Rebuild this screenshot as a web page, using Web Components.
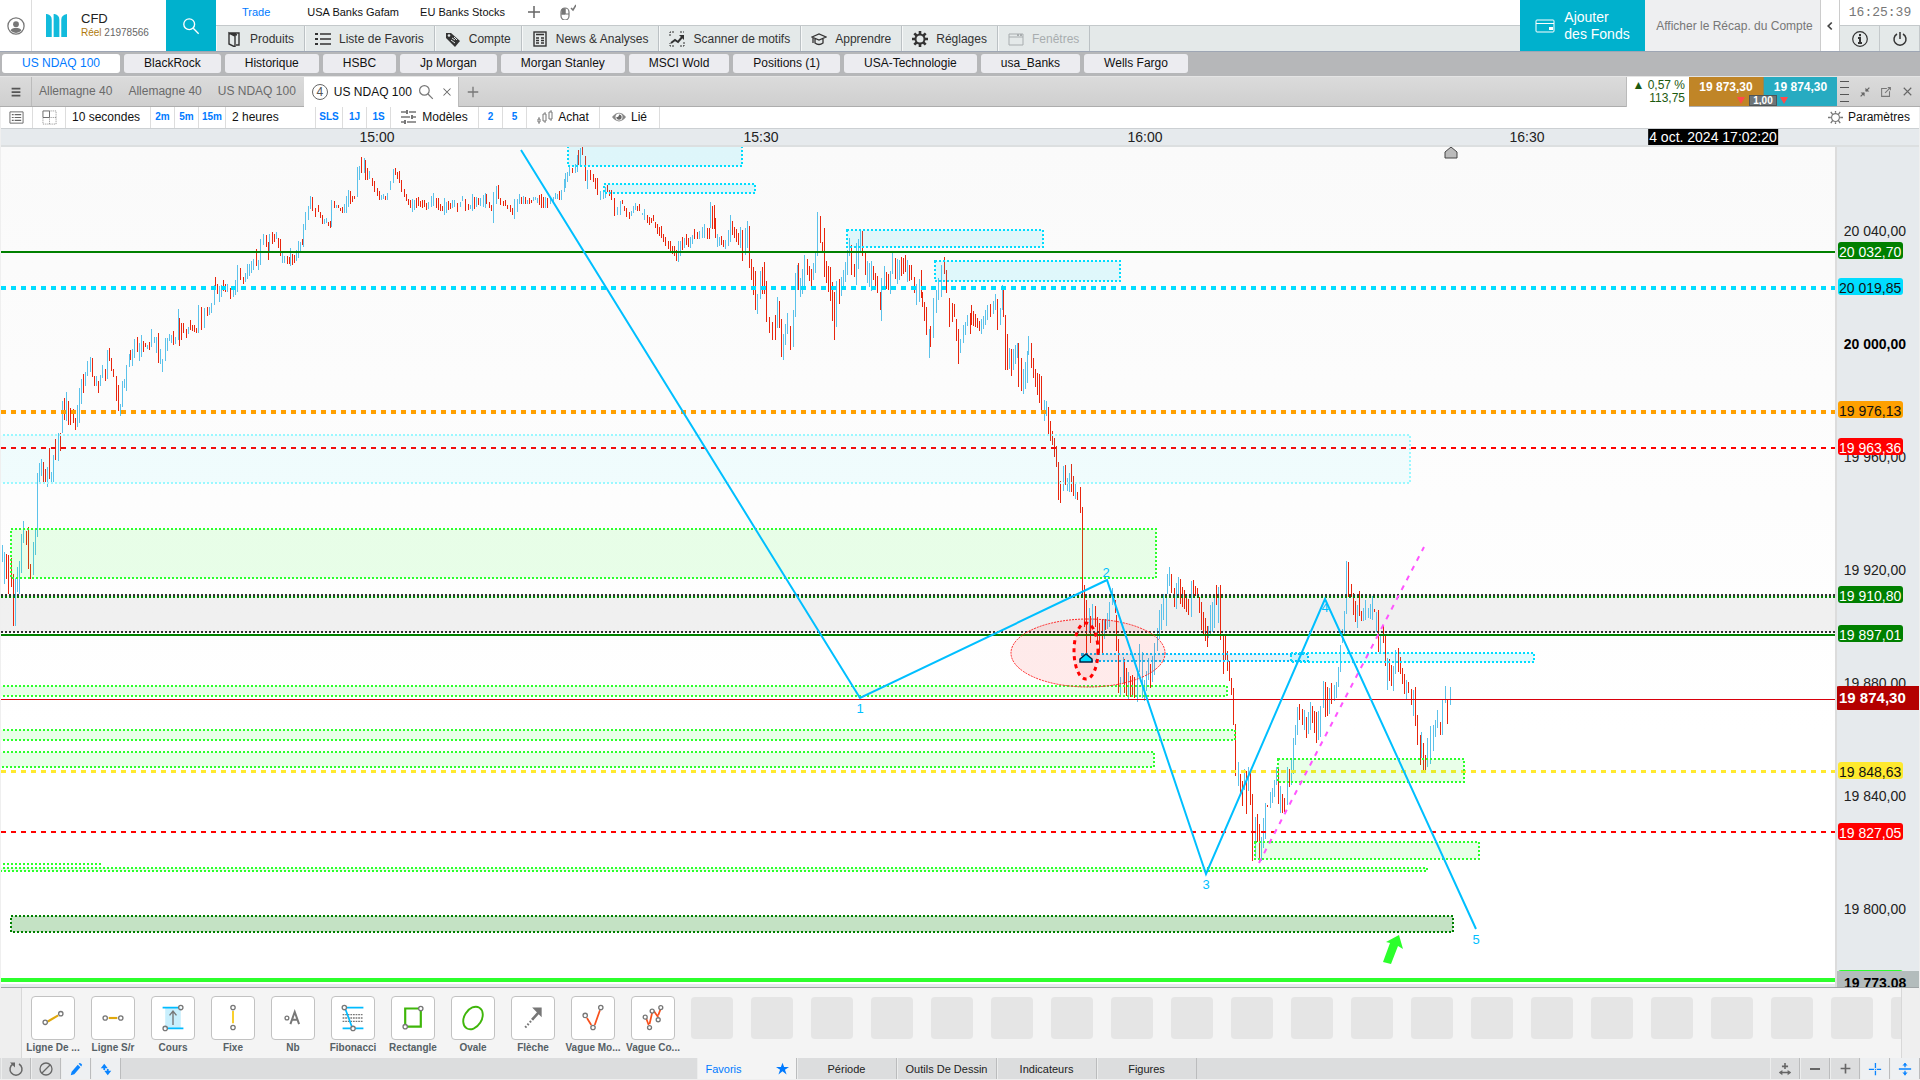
<!DOCTYPE html>
<html lang="fr">
<head>
<meta charset="utf-8">
<title>CFD - US NDAQ 100</title>
<style>
	body {
		margin: 0;
		height: 100vh;
		overflow: hidden;
		font: 12px/16px "Liberation Sans", Arial, sans-serif;
		color: #222;
		background: #efefef;
	}
</style>
</head>
<body>
<trading-desk></trading-desk>

<script>
const BUTTON_RESET = `
	button, a, select, input {
		font: inherit;
		color: inherit;
		background: none;
		border: 0;
		padding: 0;
		margin: 0;
		border-radius: 0;
		box-sizing: border-box;
		text-decoration: none;
		white-space: nowrap;
	}
	select { appearance: none; }
`;

/**
 * Base class: clones the static template of the subclass in an open shadow root
 */
class BaseElement extends HTMLElement {
	constructor() {
		super();

		const template = document.createElement("template");
		template.innerHTML = this.constructor.template;

		this.attachShadow({mode: "open"});
		this.shadowRoot.appendChild(template.content.cloneNode(true));
	}
}

const ICONS = {
	user: `<circle cx="10" cy="10" r="9" fill="none" stroke="#777" stroke-width="1.4"/><circle cx="10" cy="8" r="3.2" fill="#777"/><path d="M4 15c1-4 11-4 12 0a8 8 0 0 1-12 0z" fill="#777"/>`,
	logo: `<path d="M0 0h1q5 1 5 6v18h-6zM8 0h1q5 1 5 6v18h-6zM22 0v24h-6v-18q0-5 6-6z" fill="#12bbdc"/>`,
	search: `<circle cx="8" cy="8" r="6" fill="none" stroke="currentColor" stroke-width="1.5"/><path d="M12.500 12.500l6 6" stroke="currentColor" stroke-width="1.5"/>`,
	plus: `<path d="M8 2v12M2 8h12" stroke="currentColor" stroke-width="var(--weight, 1.5)"/>`,
	mouse: `<rect x="1" y="4" width="8" height="12" rx="4" fill="none" stroke="#777" stroke-width="1.2"/><path d="M2 5h3v5h-3zM5 4v6M1 10h8" fill="#777" stroke="#777"/><path d="M11 4l2 2 3-5" fill="none" stroke="#777" stroke-width="1.5"/>`,
	book: `<path d="M3 2h10v12h-3M3 2l6 3v11l-6-3zM5 2l6 2" fill="none" stroke="currentColor" stroke-width="1.4"/>`,
	list: `<path d="M5 3h11M5 8h11M5 13h11" stroke="currentColor" stroke-width="1.6"/><path d="M0 2h3v2h-3zM0 7h3v2h-3zM0 12h3v2h-3z" fill="currentColor"/>`,
	tag: `<path d="M1 2l5 0 9 8-5 6-9-9z" fill="currentColor"/><circle cx="4" cy="4.500" r="1.300" fill="#e4e9e9"/><path d="M7 7l3 2M6 9l4 3M9 6l3 3" stroke="#e4e9e9"/>`,
	news: `<rect x="2" y="1" width="12" height="14" fill="none" stroke="currentColor" stroke-width="1.400"/><path d="M4 3.500h8M4 7h3M4 9.500h3M4 12h3M9 7h3M9 9.500h3M9 12h3" stroke="currentColor" stroke-width="1.400"/>`,
	scanner: `<path d="M1 5v-4h4M11 1h4M15 11v4h-4M5 15h-4v-3" fill="none" stroke="currentColor" stroke-dasharray="2 1"/><path d="M2 12l4-3 3 2 5-6" fill="none" stroke="currentColor" stroke-width="2"/><path d="M10 4h5v5z" fill="currentColor"/>`,
	learn: `<path d="M1 6l7-3 7 3-7 3zM4 8v4q4 3 8 0v-4M2 7v5" fill="none" stroke="currentColor" stroke-width="1.300"/>`,
	gear: `<circle cx="8" cy="8" r="4.500" fill="none" stroke="currentColor" stroke-width="2"/><g stroke="currentColor" stroke-width="2.600"><path d="M8 0v3M8 13v3M0 8h3M13 8h3M2.300 2.300l2.200 2.200M11.500 11.500l2.200 2.200M2.300 13.700l2.200-2.200M11.500 4.500l2.200-2.200"/></g>`,
	sun: `<circle cx="8" cy="8" r="4.200" fill="none" stroke="#777" stroke-width="1.200"/><path d="M8 1v2M8 13v2M0 8h3M13 8h3M3 2l2 3M11 11l2 3M3 14l2-3M11 5l2-3" stroke="#777" stroke-width="1.400"/>`,
	window: `<path d="M1 3h14v11h-14zM1 6h14" fill="none" stroke="currentColor"/><path d="M9 3h2v2h-2zM12 3h2v2h-2z" fill="currentColor"/>`,
	card: `<rect x="1" y="4" width="18" height="12" rx="1" fill="none" stroke="#fff"/><path d="M1 7.500h18" stroke="#fff"/><path d="M14 11h4v3h-4z" fill="#fff"/>`,
	chevron: `<path d="M10 4l-4 4 4 4" fill="none" stroke="#444" stroke-width="2"/>`,
	info: `<circle cx="8" cy="8" r="7.300" fill="none" stroke="currentColor" stroke-width="1.200"/><path d="M8 3v2.200M6 7h2v5M6 12h4" fill="none" stroke="currentColor" stroke-width="2"/>`,
	power: `<path d="M5 3a6 6 0 1 0 6 0M8 1v7" fill="none" stroke="currentColor" stroke-width="1.500"/>`,
	burger: `<path d="M3 4h10M3 8h10M3 12h10" stroke="#555" stroke-width="2"/>`,
	close: `<path d="M4 4l8 8M12 4l-8 8" stroke="#666" stroke-width="1.200"/>`,
	shrink: `<path d="M3 13l4-4M13 3l-4 4" stroke="#666" stroke-width="1.500"/><path d="M3 8.500h4.500v4.500zM8.500 3v4.500h4.500z" fill="#666"/>`,
	popout: `<path d="M9 4h-6v9h9v-6M7 9l6-6M10 3h3v3" fill="none" stroke="#777" stroke-width="1.200"/>`,
	lines: `<path d="M3 2.500h9M3 8.500h9M3 15.500h9M3 22.500h9" stroke="#555"/>`,
	sheet: `<path d="M1 2h14v12h-14z" fill="none" stroke="#666"/><path d="M3 5h2M3 8h2M3 11h2M6 5h7M6 8h7M6 11h7" stroke="#666" stroke-width="1.300"/>`,
	grid: `<path d="M1 1h7v7h-7z" fill="none" stroke="#666"/><path d="M8 1h7v14h-14v-7M8 8h7M8 8v7" fill="none" stroke="#888" stroke-dasharray="1 1"/>`,
	models: `<path d="M0 3h5M8 3h7M0 8h9M12 8h3M0 13h3M6 13h9" stroke="#777" stroke-width="1.500"/><path d="M6 1v4M11 6v4M4 11v4" stroke="#777" stroke-width="2"/>`,
	bars: `<path d="M2 8v7M8 3v11M14 1v11" stroke="#888"/><path d="M1 10h2v3h-2zM6 5h3v7h-3zM12 3h3v7h-3z" fill="#fff" stroke="#777"/>`,
	eye: `<path d="M0 8q8-10 16 0q-8 10-16 0z" fill="#888"/><circle cx="8" cy="8" r="4" fill="#fff"/><path d="M8 5a3 3 0 1 1-3 3q3 0 3-3z" fill="#666"/>`,
	trend: `<path d="M9 21l12-7" stroke="#e0a80c" stroke-width="2.500"/><circle cx="6" cy="22" r="2.500"/><circle cx="24" cy="12" r="2.500"/>`,
	support: `<path d="M10 17h10" stroke="#e0a80c" stroke-width="2.500"/><circle cx="6" cy="17" r="2.500"/><circle cx="24" cy="17" r="2.500"/>`,
	price: `<path d="M6 5h18v24h-18z" fill="#c8effd" stroke="none"/><path d="M3 5h18M9 29h18" stroke="#0bf" stroke-width="2"/><path d="M15 25v-16M11 14l4-5 4 5" stroke-width="1.600"/><circle cx="24" cy="5" r="2.500"/><circle cx="6" cy="29" r="2.500"/>`,
	fixed: `<path d="M15 9v14" stroke="#f8c80c" stroke-width="2"/><circle cx="15" cy="5" r="2.500"/><circle cx="15" cy="28" r="2.500"/>`,
	letter: `<circle cx="8" cy="17" r="2.200"/><path d="M12 24l5-14 5 14M14 19h6" stroke-width="2.300"/>`,
	fib: `<path d="M8 5h19M3 29h24" stroke="#0bf" stroke-width="2"/><path d="M3 13h24M3 17h24M3 21h24" stroke-dasharray="2 1"/><path d="M6 6l8 22" stroke="#0bf" stroke-width="2"/><circle cx="5" cy="5" r="2.500" fill="#fff"/><circle cx="15" cy="29" r="2.500" fill="#fff"/>`,
	rect: `<path d="M6 6h18v21h-18z" stroke="#3fb60a" stroke-width="2.500"/><circle cx="24" cy="6" r="2.500" fill="#fff"/><circle cx="6" cy="27" r="2.500" fill="#fff"/>`,
	oval: `<ellipse cx="15" cy="17" rx="10" ry="14" transform="rotate(32 15 17)" stroke="#3fb60a" stroke-width="2.200"/>`,
	arrow: `<path d="M6 28l9-10" stroke-width="2.500" stroke-dasharray="2 2"/><path d="M14 19l8-9" stroke-width="3"/><path d="M14 5h11v11l-4-4-3-3z" fill="#777" stroke="none"/>`,
	wave: `<path d="M8 17l5 8M17 25l6-17" stroke="#f8501c" stroke-width="2"/><circle cx="6" cy="14" r="2.500"/><circle cx="15" cy="28" r="2.500"/><circle cx="24" cy="5" r="2.500"/>`,
	waves: `<path d="M7 17l3 8M11 24l3-13M16 9l5 7M21 14l3-8" stroke="#f8501c" stroke-width="2"/><g fill="#fff"><circle cx="6" cy="16" r="2.300"/><circle cx="11" cy="28" r="2.300"/><circle cx="14" cy="9" r="2.300"/><circle cx="21" cy="19" r="2.300"/><circle cx="24" cy="5" r="2.300"/></g>`,
	reload: `<path d="M11 3a6 6 0 1 1-6 0" fill="none" stroke="#666" stroke-width="1.500"/><path d="M2 1.500h5v5z" fill="#666"/>`,
	forbid: `<circle cx="8" cy="8" r="6" fill="none" stroke="#666" stroke-width="1.300"/><path d="M4 12l8-8" stroke="#666" stroke-width="1.300"/>`,
	pencil: `<path d="M2 15l1-4 7-8 3 3-7 8zM11 2l1-1q2 0 3 2l-1 2z" fill="currentColor"/>`,
	updown: `<path d="M2 7l4-5 4 5zM6 10h8l-4 5zM5 7h2v2h-2zM9 8h2v2h-2z" fill="currentColor"/>`,
	star: `<path d="M8 1l2 5h6l-5 3.500 2 6-5-4-5 4 2-6-5-3.500h6z" fill="currentColor"/>`,
	scale: `<path d="M8 1v7M4.500 5h7M2 12h12" stroke="#666" stroke-width="1.800"/><path d="M1 12l4-3v6zM15 12l-4-3v6z" fill="#666"/>`,
	minus: `<path d="M3 8h10" stroke="#666" stroke-width="2"/>`,
	cross: `<path d="M8.500 1v14M1 8.500h14" stroke="currentColor" stroke-width="1.500"/><path d="M7 7h3v3h-3z" fill="#eef0f2"/><path d="M8 8h1v1h-1z" fill="currentColor"/>`,
	split: `<path d="M1 8h14M8 1v5M8 10v5" stroke="currentColor" stroke-width="1.500"/><path d="M5 4l3-3 3 3zM5 12l3 3 3-3z" fill="currentColor"/>`
};

/**
 * <ui-icon name size box> draws one of the ICONS
 */
class UiIcon extends HTMLElement {
	constructor() {
		super();
		this.attachShadow({mode: "open"});
	}

	connectedCallback() {
		const size = this.getAttribute("size") || "16";
		const box = this.getAttribute("box") || "16 16";

		this.shadowRoot.innerHTML = `
		<style>
		:host { display: inline-flex; flex: none; }
		svg { display: block; }
		</style>
		<svg width="${size}" height="${this.getAttribute("h") || size}" viewBox="0 0 ${box}" aria-hidden="true">${ICONS[this.getAttribute("name")]}</svg>`;
	}
}

customElements.define("ui-icon", UiIcon);

class MenuItem extends BaseElement {
	static template = `
	<style>
	${BUTTON_RESET}
	:host {
		display: flex;
		border-right: 1px solid #bbc1c4;
		border-left: 1px solid #f6f8f8;
	}
	:host([disabled]) { color: #a8adaf; }
	button {
		display: flex;
		align-items: center;
		gap: 8px;
		padding: 0 10px 0 9px;
	}
	</style>
	<button type="button"><slot name="icon"></slot><slot></slot></button>
	`;
}

customElements.define("menu-item", MenuItem);

class AppHeader extends BaseElement {
	static template = `
	<style>
	${BUTTON_RESET}
	:host {
		display: flex;
		height: 51px;
		background: #fff;
		border-bottom: 1px solid #9ea6b4;
	}
	.user {
		width: 32px;
		border-right: 1px solid #ddd;
		display: grid;
		place-items: center;
	}
	.account {
		display: flex;
		align-items: center;
		gap: 14px;
		width: 134px;
		padding-left: 14px;
		box-sizing: border-box;
	}
	.account b { display: block; font-weight: normal; font-size: 13px; line-height: 15px; }
	.account small { display: block; font-size: 10px; line-height: 14px; color: #666; }
	.account i { font-style: normal; color: #b07a0c; }
	.search { width: 50px; background: #00b1cd; color: #fff; display: grid; place-items: center; }
	.center { flex: 1; display: flex; flex-direction: column; min-width: 0; }
	.spaces {
		height: 25px;
		display: flex;
		align-items: center;
		font-size: 11px;
		padding-left: 26px;
		color: #111;
		box-sizing: border-box;
		padding-bottom: 1px;
	}
	.spaces a { margin-right: 21px; }
	.spaces a:first-child { color: #007aff; margin-right: 37px; }
	.spaces button { display: flex; margin: 0 18px 0 0; color: #666; }
	nav {
		flex: 1;
		display: flex;
		background: #e4e9e9;
		border-top: 1px solid #c4c9cb;
		color: #333;
	}
	.funds {
		width: 125px;
		background: #00b1cd;
		color: #fff;
		font-size: 14px;
		line-height: 17px;
		display: flex;
		align-items: center;
		justify-content: center;
		gap: 9px;
		text-align: left;
	}
	.recap { width: 176px; padding-left: 4px; background: #eeeff1; color: #777; border-right: 1px solid #ccc; }
	.fold { width: 19px; border-right: 1px solid #ccc; display: grid; place-items: center; }
	.side { width: 80px; display: grid; grid-template: 25px 1fr / 1fr 1fr; }
	time {
		grid-column: 1 / 3;
		font: 13px/26px "Liberation Mono", monospace;
		color: #777;
		text-align: center;
	}
	.side button {
		background: #e4e9e9;
		border-top: 1px solid #c4c9cb;
		border-right: 1px solid #c4c9cb;
		display: grid;
		place-items: center;
		color: #333;
	}
	</style>
	<button class="user" type="button" aria-label="Profil"><ui-icon name="user" size="18" box="20 20"></ui-icon></button>
	<div class="account">
		<ui-icon name="logo" size="21" h="23" box="22 24"></ui-icon>
		<div><b>CFD</b><small><i>Réel</i> 21978566</small></div>
	</div>
	<button class="search" type="button" aria-label="Rechercher"><ui-icon name="search" size="18" box="20 20"></ui-icon></button>
	<div class="center">
		<div class="spaces">
			<a href="#trade">Trade</a><a href="#gafam">USA Banks Gafam</a><a href="#eu">EU Banks Stocks</a>
			<button type="button" aria-label="Ajouter"><ui-icon name="plus"></ui-icon></button>
			<button type="button" aria-label="Souris"><ui-icon name="mouse"></ui-icon></button>
		</div>
		<nav>
			<menu-item><ui-icon slot="icon" name="book"></ui-icon>Produits</menu-item>
			<menu-item><ui-icon slot="icon" name="list"></ui-icon>Liste de Favoris</menu-item>
			<menu-item><ui-icon slot="icon" name="tag"></ui-icon>Compte</menu-item>
			<menu-item><ui-icon slot="icon" name="news"></ui-icon>News &amp; Analyses</menu-item>
			<menu-item><ui-icon slot="icon" name="scanner"></ui-icon>Scanner de motifs</menu-item>
			<menu-item><ui-icon slot="icon" name="learn"></ui-icon>Apprendre</menu-item>
			<menu-item><ui-icon slot="icon" name="gear"></ui-icon>Réglages</menu-item>
			<menu-item disabled><ui-icon slot="icon" name="window"></ui-icon>Fenêtres</menu-item>
		</nav>
	</div>
	<button class="funds" type="button"><ui-icon name="card" size="20" box="20 20"></ui-icon><span>Ajouter<br>des Fonds</span></button>
	<button class="recap" type="button">Afficher le Récap. du Compte</button>
	<button class="fold" type="button" aria-label="Replier"><ui-icon name="chevron" size="14"></ui-icon></button>
	<div class="side">
		<time>16:25:39</time>
		<button type="button" aria-label="Infos"><ui-icon name="info"></ui-icon></button>
		<button type="button" aria-label="Quitter"><ui-icon name="power"></ui-icon></button>
	</div>
	`;
}

customElements.define("app-header", AppHeader);

class DeskTabs extends BaseElement {
	static template = `
	<style>
	${BUTTON_RESET}
	:host {
		display: flex;
		gap: 4px;
		height: 24px;
		padding: 2px 2px 3px;
		box-sizing: border-box;
		background: #b6b7b9;
	}
	button { background: #ececf0; border-radius: 3px; padding: 0 20px 2px; color: #111; }
	button.on { background: #fff; color: #007aff; }
	</style>
	<button type="button" class="on">US NDAQ 100</button>
	<button type="button">BlackRock</button>
	<button type="button">Historique</button>
	<button type="button">HSBC</button>
	<button type="button">Jp Morgan</button>
	<button type="button">Morgan Stanley</button>
	<button type="button">MSCI Wold</button>
	<button type="button">Positions (1)</button>
	<button type="button">USA-Technologie</button>
	<button type="button">usa_Banks</button>
	<button type="button">Wells Fargo</button>
	`;
}

customElements.define("desk-tabs", DeskTabs);

class ChartTabs extends BaseElement {
	static template = `
	<style>
	${BUTTON_RESET}
	:host {
		display: flex;
		height: 31px;
		box-sizing: border-box;
		background: linear-gradient(#dbdbdb, #cfcfcf);
		border-bottom: 1px solid #adadad;
		border-top: 1px solid #e4e4e4;
		color: #6a6a6a;
	}
	.menu { width: 32px; display: grid; place-items: center; border-right: 1px solid #bbb; }
	.tab { padding: 0 8px 1px; }
	.tab.first { padding-left: 7px; }
	.current {
		display: flex;
		align-items: center;
		gap: 6px;
		width: 155px;
		margin-bottom: -1px;
		padding: 0 8px;
		box-sizing: border-box;
		background: #fff;
		color: #111;
		white-space: nowrap;
		border-right: 1px solid #bbb;
	}
	.current span {
		width: 14px;
		flex: none;
		border: 1px solid #666;
		border-radius: 50%;
		line-height: 14px;
		text-align: center;
		color: #555;
	}
	.current button { display: flex; color: #777; }
	.add { padding: 0 7px; color: #777; display: flex; align-items: center; }
	.change {
		margin-left: auto;
		width: 58px;
		padding: 2px 4px 0 0;
		background: #fff;
		color: #1d5a10;
		line-height: 13px;
		text-align: right;
		margin-bottom: -1px;
		border-left: 1px solid #bbb;
	}
	.quote { position: relative; display: flex; }
	.quote button { width: 74px; font-weight: bold; color: #fff; padding-bottom: 9px; }
	.sell { background: #c08527; }
	.buy { background: #27abc1; border-left: 1px solid #8a8a60; }
	.size {
		position: absolute;
		bottom: 0;
		left: calc(50% - 14px);
		width: 28px;
		height: 11px;
		background: #6d7578;
		border: 1px solid #4e5558;
		color: #fff;
		font-weight: bold;
		font-size: 10px;
		line-height: 9px;
		text-align: center;
	}
	.quote::before, .quote::after {
		content: "";
		position: absolute;
		z-index: 1;
		bottom: 2px;
		left: 48px;
		border: 4px solid transparent;
		border-top: 7px solid #ff4a4a;
		border-bottom: 0;
	}
	.quote::after { left: 91px; }
	.tools { display: flex; align-items: center; width: 83px; justify-content: space-between; padding-right: 5px; box-sizing: border-box; }
	.tools button { display: flex; }
	</style>
	<button class="menu" type="button" aria-label="Menu"><ui-icon name="burger" size="14"></ui-icon></button>
	<button class="tab first" type="button">Allemagne 40</button>
	<button class="tab" type="button">Allemagne 40</button>
	<button class="tab" type="button">US NDAQ 100</button>
	<div class="current">
		<span>4</span>US NDAQ 100
		<button type="button" aria-label="Rechercher"><ui-icon name="search" box="20 20"></ui-icon></button>
		<button type="button" aria-label="Fermer"><ui-icon name="close" size="14"></ui-icon></button>
	</div>
	<button class="add" type="button" aria-label="Nouvel onglet"><ui-icon name="plus" size="14"></ui-icon></button>
	<div class="change">▲ 0,57 %<br>113,75</div>
	<div class="quote">
		<button class="sell" type="button">19 873,30</button>
		<button class="buy" type="button">19 874,30</button>
		<input class="size" aria-label="Taille" value="1,00">
	</div>
	<div class="tools">
		<ui-icon name="lines" size="14" h="26" box="14 26"></ui-icon>
		<button type="button" aria-label="Réduire"><ui-icon name="shrink" size="14"></ui-icon></button>
		<button type="button" aria-label="Détacher"><ui-icon name="popout" size="14"></ui-icon></button>
		<button type="button" aria-label="Fermer"><ui-icon name="close" size="15"></ui-icon></button>
	</div>
	`;
}

customElements.define("chart-tabs", ChartTabs);

class ChartToolbar extends BaseElement {
	static template = `
	<style>
	${BUTTON_RESET}
	:host {
		display: flex;
		height: 22px;
		box-sizing: border-box;
		background: #fff;
		border-bottom: 1px solid #ccd0d3;
		margin: 0 1px;
		color: #111;
	}
	button, select {
		display: flex;
		align-items: center;
		justify-content: center;
		gap: 5px;
		border-right: 1px solid #ddd;
		padding: 0 0 1px;
	}
	.mini { width: 24px; color: #007aff; font-weight: bold; font-size: 10px; }
	.wide { width: 27px; }
	.icon { width: 32px; }
	.icon.sheet { width: 33px; }
	select { padding-left: 6px; }
	.step { width: 85px; }
	.span { width: 90px; }
	.models { width: 88px; }
	.buy { width: 73px; }
	.linked { width: 60px; }
	.params { margin-left: auto; border: 0; padding-right: 9px; }
	</style>
	<button class="icon" type="button" aria-label="Liste"><ui-icon name="sheet" size="15"></ui-icon></button>
	<button class="icon sheet" type="button" aria-label="Grille"><ui-icon name="grid" size="15"></ui-icon></button>
	<select class="step" aria-label="Intervalle"><option>10 secondes</option></select>
	<button class="mini" type="button">2m</button>
	<button class="mini" type="button">5m</button>
	<button class="mini wide" type="button">15m</button>
	<select class="span" aria-label="Période"><option>2 heures</option></select>
	<button class="mini wide" type="button">SLS</button>
	<button class="mini" type="button">1J</button>
	<button class="mini" type="button">1S</button>
	<button class="models" type="button"><ui-icon name="models"></ui-icon>Modèles</button>
	<button class="mini" type="button">2</button>
	<button class="mini" type="button">5</button>
	<button class="buy" type="button"><ui-icon name="bars"></ui-icon>Achat</button>
	<button class="linked" type="button"><ui-icon name="eye" size="14"></ui-icon>Lié</button>
	<button class="params" type="button"><ui-icon name="sun" size="15"></ui-icon>Paramètres</button>
	`;
}

customElements.define("chart-toolbar", ChartToolbar);

// bars: x, colour (b up, r down), high-low
const BARS = `2b545-562 4b552-584 6r554-579 8r555-594 11r558-587 13r574-626 15b578-626 17b567-592 19b561-594 21b534-573 23b521-543 26r531-545
28r527-569 30r564-579 33b542-575 35b530-555 37b473-537 39b463-482 41b459-476 43r462-483 45r469-482 47b467-487 49r448-479 51b472-483
53b455-482 55r439-460 58b433-461 60r433-451 62b401-433 64r398-420 66b392-421 68r401-425 70r408-425 73r409-423 75r418-430
79b388-423 81b379-404 83r374-393 85b372-386 87b361-376 90b357-372 92r358-377 94r376-386 96b376-386 98r381-393 102b365-378 105r369-381
107b350-379 109r348-361 111r358-371 113r369-377 116r376-401 118r385-411 120b404-416 122b381-407 124b379-388 126b365-391 129b354-367 130r350-360
132b349-366 134b339-358 137r337-352 139b343-361 141b335-357 143r341-352 145r343-347 149r342-350 151b329-347 154b337-343
158r333-363 160b349-364 162b359-372 165b338-361 169b334-341 173r331-345 175b337-344 178b309-340 179r318-346 183r323-333 186r329-338
190r320-330 196r328-333 198b305-333 201r307-330 204b308-328 207r307-316 211b303-313 214b285-305 215r277-286 219b286-302
223r280-291 227b284-292 230r288-299 233b290-297 237b265-292 240r268-280 243r277-284 247b264-279 253b259-270 256r249-266
258b260-270 260b239-265 263b234-245 266r235-247 268r242-260 269b234-251 272r232-244 276b232-239 280r239-256 282b253-263
289r257-264 290b248-266 294r255-263 298b241-258 302r239-245 303b224-247 305b212-230 310b196-209 312r197-211 315r208-217
318r205-212 322r215-224 326b218-223 330r221-228 331b200-227 334r201-208 338r205-208 342r207-213 346b196-213 348b190-207
350r191-204 354r196-199 357b167-197 359b166-180 361r157-173 364b158-173 365r160-180 369b171-179 374r181-192 379r191-200
383b194-199 387b193-200 390b181-190 393b169-183 395r168-175 399r171-183 401r180-192 406r194-201 410r200-208 412b199-212
418r197-206 426r203-210 433b193-206 438r198-210 442r206-211 444b198-215 448r201-210 454b200-207 457r203-212 462b196-201
465r199-211 470b205-209 472b194-211 478r198-205 485b193-208 486r194-204 491r205-211 493b192-223 496b186-204 498r185-199
500r198-205 505r200-206 512r208-215 514b199-219 519b194-204 525r197-204 529r198-204 535b197-200 541r194-208 547r198-208
550b197-204 555b193-199 561b190-200 564b179-192 565b173-188 569b167-176 572r168-173 577b155-172 578r150-165 580b148-165
582r147-155 585r156-181 587b170-189 590r170-180 593r174-182 597r178-195 600b191-200 605b187-198 607r185-192 611r190-200
614r198-216 617b207-215 620b201-215 622r200-204 626r208-217 629r212-219 635b203-210 639r204-211 642b213-215 644b209-220
649r217-225 653r215-221 657r224-234 661r226-238 665r237-246 670r241-251 674r246-256 676r250-261 678b241-262 682r237-250
686r234-245 690b237-248 694r229-239 697r232-239 704b224-238 709r228-239 710b202-228 714r205-229 715r218-238 717b234-247
721r236-245 725b240-249 730b215-242 732r221-235 738r233-245 740b227-248 742r230-261 747b221-248 749r226-268 751r259-280
755r271-310 757b294-314 760b271-299 762r267-294 764r262-294 766r281-322 769r317-333 772r322-340 775r315-340 777b297-328
779r301-328 781r319-357 783b334-360 785b324-345 787b313-334 790r326-350 793b310-347 795b273-317 797b265-290 798r263-290
800b278-297 804b255-290 807r259-275 811r269-286 815b253-273 817b212-256 820r216-243 822r242-251 824r228-277 826r261-283
830r267-301 834r292-340 836b281-327 839r279-304 843b270-288 847b250-275 849b238-256 851r245-275 854r264-277 856b243-285
860b230-252 862r231-256 865r253-275 867b261-283 871b261-291 873r266-280 877r276-293 880r292-310 881b278-321 884b266-287
888r274-290 890b271-294 892b253-274 897b259-284 901r257-276 905r255-272 907b260-282 911r265-280 916b284-305 921r270-298
922r292-307 926r307-335 929b329-358 930r326-347 933b298-338 936b290-313 938b278-300 941b265-297 944r257-274 946r270-293
949r298-327 954r304-317 958r329-364 960b339-353 963b325-343 967b315-326 970r313-334 971r305-325 977r318-328 981b319-334
987b305-320 990r304-317 995b294-310 997r299-330 1000b308-325 1002b285-310 1003r289-317 1005r315-370 1009b348-369
1011r349-376 1017b343-358 1018r343-387 1023b369-394 1027b351-383 1028b336-355 1031r343-368 1035r369-387 1041r376-411
1044b400-421 1046b401-416 1048r407-436 1052r431-445 1054r438-457 1056r446-467 1058r462-500 1060r481-503 1063b466-491
1065r465-485 1067b478-491 1071r464-492 1075b483-499 1077r492-500 1080r487-513 1082r507-595 1084r585-627 1086r600-655
1089b608-633 1090r616-643 1092b604-627 1095r606-627 1099r623-655 1102r619-654 1104b619-639 1105r619-630 1109b602-627
1112b588-605 1115r600-613 1116r615-651 1118r639-693 1120b677-695 1123b657-683 1124r659-693 1128b672-699 1132r675-695
1134r677-698 1137b672-702 1139b644-672 1142b652-698 1144b680-701 1148b658-680 1150r664-688 1154b643-675 1157b628-651
1159b610-639 1163b594-620 1166b594-626 1167b574-594 1169b567-586 1171r574-593 1174r588-607 1176b583-609 1178b577-595
1180r579-604 1184r590-609 1188r599-615 1191b581-617 1193r580-596 1197r588-596 1201r602-630 1207r626-647 1208b626-638
1210b605-635 1214b595-628 1216r585-605 1220r585-640 1223r636-674 1225r636-660 1229r661-681 1231r678-695 1233r688-725
1235r724-776 1238b762-786 1242r781-806 1244b769-790 1246r771-814 1248b767-791 1250r773-805 1252r794-861 1255b817-857
1257r814-842 1259r824-863 1261b837-861 1263b818-848 1265b803-839 1267r805-807 1270b792-808 1274b780-797 1276b767-785
1278r769-804 1280b786-813 1284r798-812 1287b767-805 1289r769-787 1291b759-785 1293b738-774 1295b725-745 1297b707-735
1299r704-720 1304b710-730 1306r717-738 1310b702-730 1312r706-723 1316r712-743 1320b706-737 1323b681-708 1325r682-717
1329b688-714 1331r683-704 1336b682-698 1338b667-687 1340b645-672 1342b629-643 1344b611-635 1346b561-614 1348r562-597
1351r584-597 1353r593-615 1357b605-628 1359r591-616 1361r611-621 1365b600-620 1368b608-618 1372b596-620 1374r609-612
1378r610-652 1380b635-653 1383r626-643 1385r636-666 1387b658-690 1389r659-681 1393b666-691 1395b650-674 1398r648-672
1400r657-674 1404r674-694 1406b680-699 1408r682-693 1411r689-705 1415r687-726 1417r715-745 1420r735-765 1421b732-758
1423r743-770 1425r755-770 1427b738-767 1430b726-764 1435b720-737 1437b710-728 1440r722-735 1442b700-735 1445b686-703
1447r699-724 1450b687-705`;

// levels across the whole plot: y, stroke width, colour, dash
const LEVELS = [
	[252, 2, "#008000", ""],
	[288, 4, "#00ddff", "5 5"],
	[412, 4, "#ffa000", "5 5"],
	[448, 2, "#ff0000", "5 5"],
	[832, 2, "#ff0000", "5 5"],
	[980, 4, "#2cff2c", ""]
];

// zones: left, top, right, bottom, stroke, fill
const GREEN = "#2cff2c";
const GREEN_FILL = "rgba(44, 255, 44, .1)";
const CYAN = "#00ddff";
const CYAN_FILL = "rgba(0, 221, 255, .11)";
const ZONES = [
	[-9, 435, 1410, 483, "#9af8ff", "rgba(0, 240, 255, .05)"],
	[11, 529, 1156, 578, GREEN, GREEN_FILL],
	[-9, 686, 1227, 696, GREEN, GREEN_FILL],
	[-9, 730, 1235, 740, GREEN, GREEN_FILL],
	[-9, 752, 1154, 767, GREEN, GREEN_FILL],
	[-9, 864, 100, 868, GREEN, "none"],
	[-9, 868, 1427, 871, GREEN, GREEN_FILL],
	[11, 916, 1453, 932, "#008000", "rgba(0, 128, 0, .23)"],
	[1278, 759, 1464, 782, GREEN, GREEN_FILL],
	[1255, 842, 1479, 859, GREEN, GREEN_FILL],
	[568, 140, 742, 166, CYAN, CYAN_FILL],
	[604, 184, 755, 193, CYAN, CYAN_FILL],
	[847, 230, 1043, 247, CYAN, CYAN_FILL],
	[935, 261, 1120, 281, CYAN, CYAN_FILL],
	[1082, 654, 1308, 661, "#00bfff", "rgba(0, 150, 220, .1)"],
	[1291, 653, 1534, 662, CYAN, CYAN_FILL]
];

const TICKS = [20040, 20000, 19960, 19920, 19880, 19840, 19800];

const TAGS = [
	[20032.70, "#008000", "#fff"],
	[20019.85, "#00ddff", "#111"],
	[19976.13, "#ffa000", "#111"],
	[19963.36, "#ff0000", "#fff"],
	[19910.80, "#008000", "#fff"],
	[19897.01, "#008000", "#fff"],
	[19848.63, "#ffe92e", "#111"],
	[19827.05, "#ff0000", "#fff"]
];

/**
 * Bars of the plot as two paths, one per colour. Gaps in the list are filled
 * with bars between their neighbours.
 */
function barPaths() {
	const paths = {b: "", r: ""};
	const bars = BARS.split(/\s+/).map(text => {
		const [, x, color, high, low] = text.match(/(\d+)([br])(\d+)-(\d+)/);
		return {x: Number(x), color, high: Number(high), low: Number(low)};
	});
	const add = (x, color, high, low) => {
		paths[color] += `M${x} ${high}h1V${low}h-1z`;
	};

	bars.forEach((bar, i) => {
		add(bar.x, bar.color, bar.high, bar.low);

		const next = bars[i + 1];
		if (!next || next.x - bar.x < 4) {
			return;
		}

		const count = Math.round((next.x - bar.x) / 2.13) - 1;
		for (let n = 1; n <= count; n++) {
			const t = n / (count + 1);
			const shift = (i * 7 + n * 5) % 7 - 3;
			const high = Math.round(bar.high + (next.high - bar.high) * t) + shift;
			const low = Math.round(bar.low + (next.low - bar.low) * t) + (shift > 0 ? 0 : shift);
			const falling = next.high > bar.high + 4 || (next.high > bar.high - 4 && (i + n) % 2);
			add(Math.round(bar.x + (next.x - bar.x) * t), falling ? "r" : "b", Math.min(high, low - 3), low);
		}
	});

	return paths;
}

function formatPrice(price) {
	const [whole, cents] = price.toFixed(2).split(".");
	return `${whole.slice(0, 2)} ${whole.slice(2)},${cents}`;
}

function priceTop(price) {
	return Math.round((20000 - price) * 2.825 + 197);
}

class PriceChart extends BaseElement {
	static template = `
	<style>
	:host {
		display: grid;
		grid-template: 18px minmax(0, 1fr) / minmax(0, 1fr) 84px;
		min-height: 0;
		margin: 0 1px;
		font-size: 14px;
		overflow: hidden;
		border-bottom: 1px solid #9fa4a6;
	}
	.times {
		grid-column: 1 / 3;
		position: relative;
		overflow: hidden;
		background: #e6eaed;
		border-bottom: 2px solid #dcdfe0;
	}
	.times span { position: absolute; top: 0; transform: translateX(-50%); color: #222; }
	.times .cursor { background: #000; color: #fff; padding: 0 1px; white-space: nowrap; }
	.plot { overflow: hidden; background: linear-gradient(#fafafa, #fff 70%); border-bottom: 3px solid #e6eaed; }
	svg { display: block; width: 100%; height: 100%; }
	.prices {
		position: relative;
		overflow: hidden;
		background: #e6eaed;
		border-left: 2px solid #dcdcdc;
		color: #222;
		white-space: nowrap;
	}
	.prices span { position: absolute; right: 13px; margin-top: -8px; }
	.prices .round { font-weight: bold; color: #000; }
	.prices .tag { left: 1px; right: auto; margin-top: -10px; padding: 2px 2px 0 1px; height: 15px; min-width: 62px; border-radius: 3px; }
	.prices .last {
		left: -1px;
		right: 0;
		margin-top: -13px;
		padding-left: 3px;
		background: #b40000;
		color: #fff;
		font: bold 15px/24px "Liberation Sans", Arial, sans-serif;
		border-radius: 3px 0 0 3px;
	}
	.prices .cursor {
		left: -1px;
		right: 0;
		margin-top: -14px;
		padding-left: 8px;
		background: #b3bcbc;
		color: #000;
		font-weight: bold;
		line-height: 24px;
	}
	</style>
	<div class="times">
		<span style="left: 376px">15:00</span>
		<span style="left: 760px">15:30</span>
		<span style="left: 1144px">16:00</span>
		<span style="left: 1526px">16:30</span>
		<span class="cursor" style="left: 1712px">4 oct. 2024 17:02:20</span>
	</div>
	<div class="plot"></div>
	<div class="prices"></div>
	`;

	connectedCallback() {
		this.drawPlot();
		this.drawPrices();
	}

	drawPlot() {
		const bars = barPaths();
		const levels = LEVELS.map(([y, width, color, dash]) =>
			`<path d="M1 ${y}H4000" stroke="${color}" stroke-width="${width}" stroke-dasharray="${dash}"/>`
		).join("");
		const zones = ZONES.map(([left, top, right, bottom, stroke, fill]) =>
			`<rect x="${left}" y="${top}" width="${right - left}" height="${bottom - top}" fill="${fill}" stroke="${stroke}" stroke-width="2" stroke-dasharray="2 2"/>`
		).join("");

		this.shadowRoot.querySelector(".plot").innerHTML = `
		<svg role="img" aria-label="US NDAQ 100">
			<g transform="translate(-1 -147)" fill="none">
				<g shape-rendering="crispEdges">
					<path d="M1 595H4000V632H1z" fill="rgba(80, 80, 80, .08)"/>
					<path d="${bars.b}" fill="#5cc2ea"/>
					<path d="${bars.r}" fill="#e8260e"/>
					${levels}
					<path d="M1 771.500H4000" stroke="#ffe92e" stroke-width="3" stroke-dasharray="5 5"/>
					<path d="M1 595H4000M1 632H4000" stroke="#333" stroke-width="2" stroke-dasharray="2 2"/>
					<path d="M1 597H4000" stroke="#008000" stroke-width="2" stroke-dasharray="2 2"/>
					<path d="M1 635H4000" stroke="#008000" stroke-width="2"/>
					${zones}
					<path d="M1 699H4000V700H1z" fill="#d8000c"/>
				</g>
				<ellipse cx="1088" cy="653" rx="77" ry="34" fill="rgba(255, 0, 0, .08)" stroke="#f22" stroke-dasharray="2 1"/>
				<ellipse cx="1086" cy="651" rx="12" ry="28" fill="rgba(255, 0, 0, .07)" stroke="#f00" stroke-width="3" stroke-dasharray="4 4"/>
				<path d="M1259 863L1424 547" stroke="#f5f" stroke-width="2" stroke-dasharray="5 6"/>
				<path d="M521 150L860 698L1107 580L1206 874L1325 599L1476 929" stroke="#00bfff" stroke-width="2"/>
				<path d="M1080 662v-3l6-5 6 5v3z" fill="#00ddff" stroke="#024" stroke-width="1.500"/>
				<path d="M1445 158v-6l6-5 6 5v6z" fill="#bbb" stroke="#444"/>
				<path d="M1399 935L1403 949L1398 946L1391 964L1383 962L1390 943L1386 942z" fill="#2cff2c"/>
				<g fill="#00bfff" font-size="13" text-anchor="middle">
					<text x="860" y="713">1</text>
					<text x="1106" y="577">2</text>
					<text x="1206" y="889">3</text>
					<text x="1325" y="612">4</text>
					<text x="1476" y="944">5</text>
				</g>
			</g>
		</svg>`;
	}

	drawPrices() {
		const ticks = TICKS.map(price =>
			`<span class="${price === 20000 ? "round" : ""}" style="top: ${priceTop(price)}px">${formatPrice(price)}</span>`
		);
		const tags = TAGS.map(([price, background, color]) =>
			`<span class="tag" style="top: ${priceTop(price)}px; background: ${background}; color: ${color}">${formatPrice(price)}</span>`
		);

		this.shadowRoot.querySelector(".prices").innerHTML = ticks.join("") + tags.join("") + `
		<span class="last" style="top: ${priceTop(19874.3)}px">${formatPrice(19874.3)}</span>
		<span class="tag" style="top: ${priceTop(19774.9)}px; background: #2cff2c"></span>
		<span class="cursor" style="top: ${priceTop(19773.08)}px">19 773.08</span>`;
	}
}

customElements.define("price-chart", PriceChart);

/**
 * One tool of the tray: icon card with its caption
 */
class ToolCard extends BaseElement {
	static template = `
	<style>
	${BUTTON_RESET}
	:host { display: block; flex: none; width: 60px; }
	button { display: flex; flex-direction: column; align-items: center; width: 100%; color: #566065; font: bold 10px/14px "Liberation Sans", Arial, sans-serif; }
	.card {
		width: 44px;
		height: 44px;
		margin-bottom: 1px;
		box-sizing: border-box;
		display: grid;
		place-items: center;
		background: #fff;
		border: 1px solid #c2c2c2;
		border-radius: 4px;
	}
	svg { display: block; fill: none; stroke: #777; stroke-width: 1.5px; }
	</style>
	<button type="button"><span class="card"><svg width="26" height="30" viewBox="0 0 30 34"></svg></span><slot></slot></button>
	`;

	connectedCallback() {
		this.shadowRoot.querySelector("svg").innerHTML = ICONS[this.getAttribute("icon")];
	}
}

customElements.define("tool-card", ToolCard);

class ToolTray extends BaseElement {
	static template = `
	<style>
	:host {
		display: grid;
		grid-template-columns: 22px minmax(0, 1fr) 19px;
		height: 70px;
		background: #f4f4f4;
	}
	.edge { background: #efefef; border: 0 solid #d8d8d8; border-right-width: 1px; }
	.edge.right { border-width: 0 0 0 1px; }
	.tools { display: flex; overflow: hidden; padding: 8px 0 0 1px; }
	.empty { flex: none; width: 42px; height: 42px; margin: 1px 10px 0 8px; background: #e5e5e5; border-radius: 4px; }
	</style>
	<div class="edge"></div>
	<div class="tools">
		<tool-card icon="trend">Ligne De ...</tool-card>
		<tool-card icon="support">Ligne S/r</tool-card>
		<tool-card icon="price">Cours</tool-card>
		<tool-card icon="fixed">Fixe</tool-card>
		<tool-card icon="letter">Nb</tool-card>
		<tool-card icon="fib">Fibonacci</tool-card>
		<tool-card icon="rect">Rectangle</tool-card>
		<tool-card icon="oval">Ovale</tool-card>
		<tool-card icon="arrow">Flèche</tool-card>
		<tool-card icon="wave">Vague Mo...</tool-card>
		<tool-card icon="waves">Vague Co...</tool-card>
	</div>
	<div class="edge right"></div>
	`;

	connectedCallback() {
		const tools = this.shadowRoot.querySelector(".tools");
		for (let i = 0; i < 21; i++) {
			const empty = document.createElement("div");
			empty.className = "empty";
			tools.appendChild(empty);
		}
	}
}

customElements.define("tool-tray", ToolTray);

class StatusBar extends BaseElement {
	static template = `
	<style>
	${BUTTON_RESET}
	:host {
		display: flex;
		height: 22px;
		box-sizing: border-box;
		background: #dcddde;
		border-bottom: 1px solid #efefef;
		padding-left: 1px;
		font-size: 11px;
		color: #222;
	}
	div { flex: 1; display: flex; }
	nav { flex: none; display: flex; width: 528px; }
	.right { justify-content: flex-end; }
	button { border-right: 1px solid #bbbcbd; border-left: 1px solid #eceded; }
	div button { width: 30px; display: grid; place-items: center; color: #0a84ff; }
	.on { background: #eef0f2; }
	nav button { width: 100px; }
	nav .fav { background: #f4f4f4; color: #007aff; display: flex; justify-content: space-between; align-items: center; padding: 0 7px 0 8px; }
	.right button { --weight: 2; }
	.right .plus { color: #666; }
	</style>
	<div class="left">
		<button type="button" aria-label="Réinitialiser"><ui-icon name="reload"></ui-icon></button>
		<button type="button" aria-label="Effacer"><ui-icon name="forbid"></ui-icon></button>
		<button class="on" type="button" aria-label="Dessiner"><ui-icon name="pencil" size="14"></ui-icon></button>
		<button class="on" type="button" aria-label="Ajuster"><ui-icon name="updown" size="14"></ui-icon></button>
	</div>
	<nav>
		<button class="fav" type="button">Favoris<ui-icon name="star" size="13"></ui-icon></button>
		<button type="button">Période</button>
		<button type="button">Outils De Dessin</button>
		<button type="button">Indicateurs</button>
		<button type="button">Figures</button>
	</nav>
	<div class="right">
		<button type="button" aria-label="Echelle"><ui-icon name="scale" size="14"></ui-icon></button>
		<button type="button" aria-label="Zoom arrière"><ui-icon name="minus"></ui-icon></button>
		<button class="plus" type="button" aria-label="Zoom avant"><ui-icon name="plus" size="13"></ui-icon></button>
		<button class="on" type="button" aria-label="Réticule"><ui-icon name="cross" size="14"></ui-icon></button>
		<button class="on" type="button" aria-label="Centrer"><ui-icon name="split" size="14"></ui-icon></button>
	</div>
	`;
}

customElements.define("status-bar", StatusBar);

class TradingDesk extends BaseElement {
	static template = `
	<style>
	:host { display: flex; flex-direction: column; height: 100%; }
	price-chart { flex: 1; }
	app-header, desk-tabs, chart-tabs, chart-toolbar, tool-tray, status-bar { flex: none; }
	</style>
	<app-header></app-header>
	<desk-tabs></desk-tabs>
	<chart-tabs></chart-tabs>
	<chart-toolbar></chart-toolbar>
	<price-chart></price-chart>
	<tool-tray></tool-tray>
	<status-bar></status-bar>
	`;
}

customElements.define("trading-desk", TradingDesk);
</script>
</body>
</html>
